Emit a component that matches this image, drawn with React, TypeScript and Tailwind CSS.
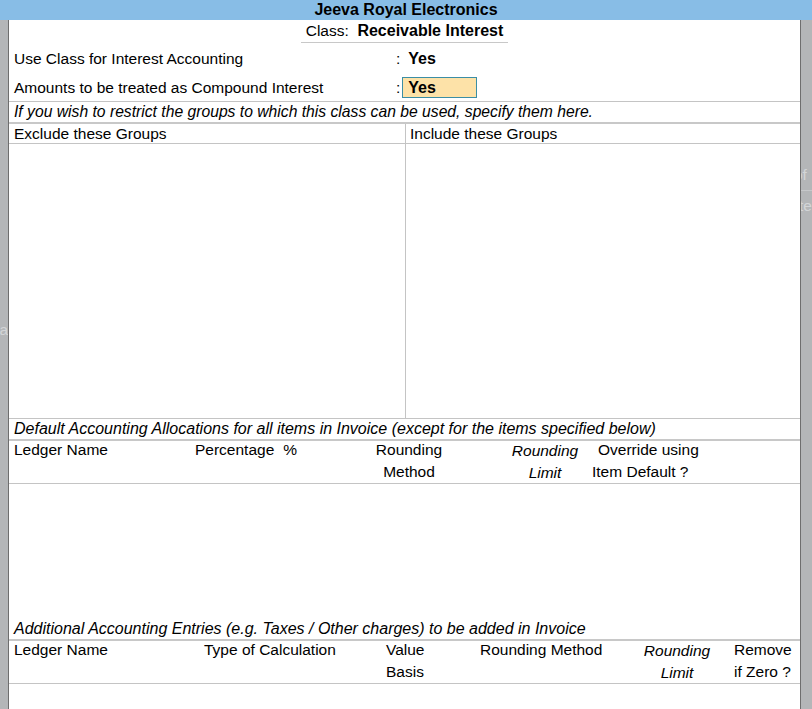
export default function App() {
  return (
    <div className="flex h-[709px] w-[812px] flex-col overflow-hidden bg-white font-['Liberation_Sans',Arial,sans-serif] text-[15.5px] text-black">
      {/* Company title bar */}
      <header className="h-[20px] shrink-0 bg-[#88bde6] text-center text-[16px] font-bold leading-[20px]">
        Jeeva Royal Electronics
      </header>

      <div className="flex min-h-0 flex-1">
        {/* Left window edge */}
        <div className="w-[8px] shrink-0 overflow-hidden bg-[#b4b6b8] text-[#d3d5d7]">
          <div className="h-[300px]" />
          <div className="-ml-[9px] leading-[20px]">na</div>
        </div>
        <div className="w-px shrink-0 bg-[#6e6e6e]" />

        {/* Main form */}
        <main className="flex w-[791px] shrink-0 flex-col">
          <div className="border-b border-[#c4c4c4] pb-[3px]">
            <div className="flex h-[23px] justify-center">
              <div className="h-[23px] border-b border-[#c8c8c8] px-[5px] pt-px leading-[20px]">
                Class:&nbsp; <span className="text-[16px] font-bold">Receivable Interest</span>
              </div>
            </div>

            <div className="mt-[6px] flex h-[20px] items-center pl-[5px] leading-[20px]">
              <span className="w-[382px]">Use Class for Interest Accounting</span>
              <span>:</span>
              <span className="ml-[8px] text-[16px] font-bold">Yes</span>
            </div>

            <div className="mt-[8px] flex h-[21px] items-center pl-[5px] leading-[19px]">
              <span className="w-[382px]">Amounts to be treated as Compound Interest</span>
              <span>:</span>
              <span className="ml-[2px] h-[21px] w-[75px] border border-[#3b8ea5] bg-[#fde2a8] pl-[5px] text-[16px] font-bold">
                Yes
              </span>
            </div>
          </div>

          <div className="h-[22px] border-b-2 border-[#c8c8c8] pl-[5px] text-[15.7px] italic leading-[20px]">
            If you wish to restrict the groups to which this class can be used, specify them here.
          </div>

          {/* Groups */}
          <div className="flex h-[295px] border-b border-[#c4c4c4]">
            <div className="flex w-[397px] flex-col border-r border-[#c4c4c4]">
              <div className="h-[20px] border-b border-[#c4c4c4] pl-[5px] leading-[19px]">
                Exclude these Groups
              </div>
            </div>
            <div className="flex flex-1 flex-col">
              <div className="h-[20px] border-b border-[#c4c4c4] pl-[4px] leading-[19px]">
                Include these Groups
              </div>
            </div>
          </div>

          {/* Default allocations */}
          <div className="h-[22px] border-b-2 border-[#c8c8c8] pl-[5px] text-[16px] italic leading-[20px]">
            Default Accounting Allocations for all items in Invoice (except for the items specified below)
          </div>
          <div className="h-[43px] border-b border-[#c4c4c4] pl-[5px] leading-[22px]">
            <div className="-mt-[2px] flex">
              <div className="w-[181px]">Ledger Name</div>
              <div className="w-[175px]">
                Percentage<span className="ml-[9px]">%</span>
              </div>
              <div className="w-[78px] text-center">
                Rounding
                <br />
                Method
              </div>
              <div className="w-[57px]" />
              <div className="w-[80px] pt-px text-center italic">
                Rounding
                <br />
                Limit
              </div>
              <div className="w-[7px]" />
              <div>
                <div className="pl-[6px]">Override using</div>
                <div>Item Default ?</div>
              </div>
            </div>
          </div>
          <div className="h-[135px]" />

          {/* Additional entries */}
          <div className="h-[22px] border-b-2 border-[#c8c8c8] pl-[5px] text-[16px] italic leading-[20px]">
            Additional Accounting Entries (e.g. Taxes / Other charges) to be added in Invoice
          </div>
          <div className="h-[43px] border-b border-[#c4c4c4] pl-[5px] leading-[22px]">
            <div className="-mt-[2px] flex">
              <div className="w-[190px]">Ledger Name</div>
              <div className="w-[182px]">Type of Calculation</div>
              <div className="w-[94px]">
                Value
                <br />
                Basis
              </div>
              <div className="w-[157px]">Rounding Method</div>
              <div className="w-[80px] pt-px text-center italic">
                Rounding
                <br />
                Limit
              </div>
              <div className="w-[17px]" />
              <div>
                Remove
                <br />
                if Zero ?
              </div>
            </div>
          </div>
          <div className="flex-1" />
        </main>

        {/* Right window edge */}
        <div className="w-px shrink-0 bg-[#6e6e6e]" />
        <div className="flex w-[11px] shrink-0 flex-col overflow-hidden bg-[#b4b6b8] text-[#d3d5d7]">
          <div className="h-[140px] shrink-0" />
          <div className="-ml-[7px] h-[30px] leading-[30px]">of</div>
          <div className="h-px bg-[#c6c8ca]" />
          <div className="-ml-[2px] leading-[30px]">te</div>
        </div>
      </div>
    </div>
  );
}
